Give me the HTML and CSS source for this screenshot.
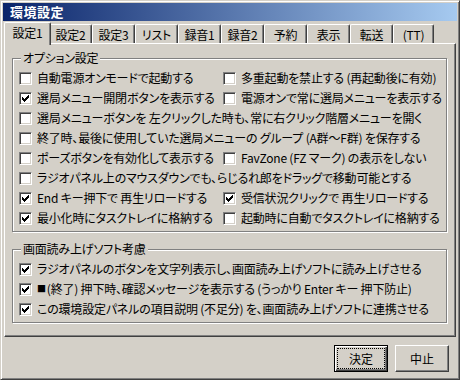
FILE: index.html
```html
<!DOCTYPE html>
<html lang="ja">
<head>
    <meta charset="UTF-8">
    <title>環境設定</title>
    <link rel="stylesheet" href="styles.css">
</head>
<body>
    <div class="dialog">
        <div class="titlebar">環境設定</div>

        <div class="tabs">
            <div class="tab active">設定1</div>
            <div class="tab">設定2</div>
            <div class="tab">設定3</div>
            <div class="tab">リスト</div>
            <div class="tab">録音1</div>
            <div class="tab">録音2</div>
            <div class="tab">予約</div>
            <div class="tab">表示</div>
            <div class="tab">転送</div>
            <div class="tab last">(TT)</div>
        </div>

        <div class="panel">
            <div class="group">
                <div class="group-title">オプション設定</div>
                <div class="options">
                    <label class="opt"><span class="cb"></span>自動電源オンモードで起動する</label>
                    <label class="opt"><span class="cb"></span>多重起動を禁止する (再起動後に有効)</label>
                    <label class="opt"><span class="cb on"></span>選局メニュー開閉ボタンを表示する</label>
                    <label class="opt"><span class="cb"></span>電源オンで常に選局メニューを表示する</label>
                    <label class="opt wide"><span class="cb"></span>選局メニューボタンを 左クリックした時も、常に右クリック階層メニューを開く</label>
                    <label class="opt wide"><span class="cb"></span>終了時、最後に使用していた選局メニューの グループ (A群～F群) を保存する</label>
                    <label class="opt"><span class="cb"></span>ポーズボタンを有効化して表示する</label>
                    <label class="opt"><span class="cb"></span>FavZone (FZ マーク) の表示をしない</label>
                    <label class="opt wide"><span class="cb"></span>ラジオパネル上のマウスダウンでも、らじるれ郎をドラッグで移動可能とする</label>
                    <label class="opt"><span class="cb on"></span>End キー押下で 再生リロードする</label>
                    <label class="opt"><span class="cb on"></span>受信状況クリックで 再生リロードする</label>
                    <label class="opt"><span class="cb on"></span>最小化時にタスクトレイに格納する</label>
                    <label class="opt"><span class="cb"></span>起動時に自動でタスクトレイに格納する</label>
                </div>
            </div>

            <div class="group">
                <div class="group-title">画面読み上げソフト考慮</div>
                <div class="options">
                    <label class="opt wide"><span class="cb on"></span>ラジオパネルのボタンを文字列表示し、画面読み上げソフトに読み上げさせる</label>
                    <label class="opt wide"><span class="cb on"></span><span class="stop">■</span>(終了) 押下時、確認メッセージを表示する (うっかり Enter キー 押下防止)</label>
                    <label class="opt wide"><span class="cb on"></span>この環境設定パネルの項目説明 (不足分) を、画面読み上げソフトに連携させる</label>
                </div>
            </div>
        </div>

        <div class="buttons">
            <button type="button" class="btn default">決定</button>
            <button type="button" class="btn">中止</button>
        </div>
    </div>
</body>
</html>
```

FILE: styles.css
```css
/* 全体 */
body {
    margin: 0;
    background-color: #d4d0c8;
    font-family: "Noto Sans CJK JP", "Liberation Sans", sans-serif;
    font-size: 12px;
    line-height: 14px;
    color: #000;
    font-feature-settings: "palt";
    letter-spacing: -0.2px;
}

/* ウィンドウ枠 */
.dialog {
    width: 460px;
    height: 380px;
    box-sizing: border-box;
    border: 1px solid;
    border-color: #d4d0c8 #404040 #404040 #d4d0c8;
    box-shadow: inset 1px 1px #fff, inset -1px -1px #808080;
    padding: 2px;
    display: flex;
    flex-direction: column;
}

.titlebar {
    height: 18px;
    line-height: 18px;
    padding-left: 7px;
    background: linear-gradient(to right, #0a246a, #a6caf0);
    color: #fff;
    font-size: 13px;
    font-weight: bold;
    letter-spacing: 0.5px;
    flex: none;
}

/* タブ */
.tabs {
    display: flex;
    align-items: flex-end;
    height: 21px;
    margin-top: 1px;
    padding-left: 3px;
    flex: none;
}

.tab {
    width: 43px;
    height: 19px;
    box-sizing: border-box;
    padding-top: 1px;
    border: 1px solid;
    border-color: #fff #404040 transparent #fff;
    border-bottom: none;
    border-radius: 2px 2px 0 0;
    box-shadow: inset -1px 0 #808080;
    display: flex;
    align-items: center;
    justify-content: center;
    flex: none;
}

.tab.last {
    width: 41px;
}

.tab.active {
    width: 47px;
    height: 23px;
    margin: 0 -2px -2px;
    padding: 0 0 3px;
    background-color: #d4d0c8;
    position: relative;
    z-index: 1;
}

/* タブ内パネル */
.panel {
    height: 294px;
    margin: 0 1px;
    box-sizing: border-box;
    border: 1px solid;
    border-color: #fff #404040 #404040 #fff;
    box-shadow: inset -1px -1px #808080;
    padding: 14px 8px 0 7px;
    flex: none;
}

/* グループボックス */
.group {
    border: 1px solid #808080;
    box-shadow: inset 1px 1px #fff, 1px 1px #fff;
}

.group + .group {
    margin-top: 17px;
}

.group-title {
    display: table;
    margin: -8px 0 0 8px;
    padding: 0 2px;
    background-color: #d4d0c8;
}

.options {
    display: grid;
    grid-template-columns: 204px 1fr;
    grid-auto-rows: 20px;
    padding: 3px 6px;
}

.opt {
    display: flex;
    align-items: center;
    white-space: pre;
}

.opt.wide {
    grid-column: 1 / -1;
}

.stop {
    font-size: 9px;
    margin-right: 1px;
}

/* チェックボックス */
.cb {
    width: 13px;
    height: 13px;
    box-sizing: border-box;
    margin-right: 5px;
    border: 1px solid;
    border-color: #808080 #fff #fff #808080;
    box-shadow: inset 1px 1px #404040, inset -1px -1px #d4d0c8;
    background-color: #fff;
    flex: none;
}

.cb.on::after {
    content: '';
    display: block;
    width: 1px;
    height: 1px;
    box-shadow:
        8px 2px #000, 7px 3px #000, 8px 3px #000,
        2px 4px #000, 6px 4px #000, 7px 4px #000, 8px 4px #000,
        2px 5px #000, 3px 5px #000, 5px 5px #000, 6px 5px #000, 7px 5px #000,
        2px 6px #000, 3px 6px #000, 4px 6px #000, 5px 6px #000, 6px 6px #000,
        3px 7px #000, 4px 7px #000, 5px 7px #000,
        4px 8px #000;
}

/* ボタン */
.buttons {
    display: flex;
    justify-content: flex-end;
    gap: 7px;
    padding: 8px 8px 0 0;
}

.btn {
    width: 54px;
    height: 27px;
    box-sizing: border-box;
    padding: 0;
    border: 1px solid;
    border-color: #fff #404040 #404040 #fff;
    box-shadow: inset -1px -1px #808080;
    background-color: #d4d0c8;
    font: inherit;
    color: #000;
}

.btn.default {
    border-color: #000;
    box-shadow: inset 1px 1px #fff, inset -1px -1px #404040, inset -2px -2px #808080;
    outline: 1px dotted #000;
    outline-offset: -4px;
}
```
